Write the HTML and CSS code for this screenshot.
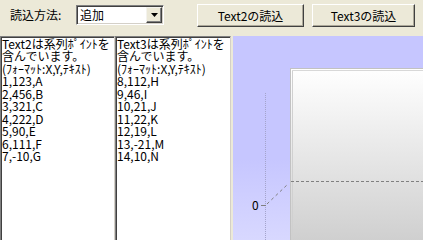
FILE: index.html
```html
<!DOCTYPE html>
<html lang="ja">
<head>
  <meta charset="UTF-8">
  <title>系列ポイントの読込</title>
  <link rel="stylesheet" href="styles.css">
</head>
<body>
  <!-- 上部のツールバー -->
  <div class="toolbar">
    <span class="label">読込方法:</span>
    <div class="combo">
      <span class="combo-text">追加</span>
      <span class="combo-btn">
        <svg width="7" height="4" viewBox="0 0 7 4"><path d="M0 0h7L3.5 4z" fill="#000"/></svg>
      </span>
    </div>
    <button class="btn btn-text2">Text2の読込</button>
    <button class="btn btn-text3">Text3の読込</button>
  </div>

  <!-- テキスト2つとチャート -->
  <div class="main">
    <div class="memo memo-left">
      Text2は系列ﾎﾟｲﾝﾄを<br>含んでいます。<br>(ﾌｫｰﾏｯﾄ:X,Y,ﾃｷｽﾄ)<br>1,123,A<br>2,456,B<br>3,321,C<br>4,222,D<br>5,90,E<br>6,111,F<br>7,-10,G
    </div>
    <div class="memo memo-right">
      Text3は系列ﾎﾟｲﾝﾄを<br>含んでいます。<br>(ﾌｫｰﾏｯﾄ:X,Y,ﾃｷｽﾄ)<br>8,112,H<br>9,46,I<br>10,21,J<br>11,22,K<br>12,19,L<br>13,-21,M<br>14,10,N
    </div>
    <div class="chart">
      <svg width="190" height="204" viewBox="0 0 190 204">
        <defs>
          <linearGradient id="panelBg" x1="0" y1="0" x2="0" y2="1">
            <stop offset="0" stop-color="#c6c6ff"/>
            <stop offset="0.6" stop-color="#c6c6ff"/>
            <stop offset="1" stop-color="#d8d8ff"/>
          </linearGradient>
          <linearGradient id="wallBg" x1="0" y1="0" x2="0" y2="1">
            <stop offset="0" stop-color="#ffffff"/>
            <stop offset="1" stop-color="#cdcdcd"/>
          </linearGradient>
        </defs>
        <rect x="0" y="0" width="190" height="204" fill="url(#panelBg)"/>
        <!-- 奥の壁 -->
        <rect x="57.5" y="32.5" width="140" height="180" fill="url(#wallBg)" stroke="#c2c2c2"/>
        <line x1="59.5" y1="34" x2="59.5" y2="204" stroke="#d0d0d0"/>
        <line x1="59" y1="34.5" x2="190" y2="34.5" stroke="#d8d8d8"/>
        <!-- 軸 -->
        <line x1="32.5" y1="57" x2="32.5" y2="204" stroke="#a4a4cc" stroke-dasharray="1 1"/>
        <line x1="58" y1="145.5" x2="190" y2="145.5" stroke="#808080" stroke-dasharray="3 2"/>
        <line x1="34" y1="168" x2="55" y2="148" stroke="#808080" stroke-dasharray="3 3"/>
        <line x1="28" y1="169.5" x2="33" y2="169.5" stroke="#808080"/>
        <text x="19" y="173.5" class="axis-label">0</text>
      </svg>
    </div>
  </div>
</body>
</html>
```

FILE: styles.css
```css
body {
  margin: 0;
  width: 423px;
  height: 240px;
  overflow: hidden;
  background-color: #ece9d8;
  font-family: "Noto Sans CJK JP", sans-serif;
  font-size: 12px;
  color: #000;
}

.toolbar {
  display: flex;
  align-items: flex-start;
  height: 36px;
  padding-left: 10px;
}

.label {
  width: 66px;
  margin-top: 8px;
  line-height: 14px;
}

.combo {
  display: flex;
  align-items: center;
  width: 88px;
  height: 20px;
  margin-top: 5px;
  box-sizing: border-box;
  background: #fff;
  border: 1px solid;
  border-color: #808080 #fff #fff #808080;
  box-shadow: inset 1px 1px #404040, inset -1px -1px #d4d0c8;
  padding: 1px;
}

.combo-text {
  flex: 1;
  padding-left: 2px;
  line-height: 16px;
}

.combo-btn {
  display: flex;
  align-items: center;
  justify-content: center;
  width: 16px;
  height: 16px;
  box-sizing: border-box;
  background: #ece9d8;
  border: 1px solid;
  border-color: #f4f3ee #404040 #404040 #f4f3ee;
  box-shadow: inset -1px -1px #808080;
}

.btn {
  height: 23px;
  margin-top: 4px;
  padding: 0;
  box-sizing: border-box;
  background: #ece9d8;
  border: 1px solid;
  border-color: #fff #404040 #404040 #fff;
  box-shadow: inset -1px -1px #aca899;
  font-family: inherit;
  font-size: 12px;
  color: #000;
}

.btn-text2 {
  width: 107px;
  margin-left: 33px;
}

.btn-text3 {
  width: 103px;
  margin-left: 8px;
}

.main {
  display: flex;
  height: 204px;
}

.memo {
  box-sizing: border-box;
  height: 210px;
  padding: 1px 0 0 1px;
  background: #fff;
  border: 1px solid;
  border-color: #808080 #d4d0c8 #fff #808080;
  box-shadow: inset 1px 1px #404040;
  line-height: 12.45px;
  white-space: nowrap;
  overflow: hidden;
}

.memo-left {
  width: 115px;
}

.memo-right {
  width: 116px;
}

.chart {
  margin-left: 2px;
  width: 190px;
  height: 204px;
}

.chart svg {
  display: block;
}

.axis-label {
  font-family: "Noto Sans CJK JP", sans-serif;
  font-size: 12px;
  fill: #000;
}
```
